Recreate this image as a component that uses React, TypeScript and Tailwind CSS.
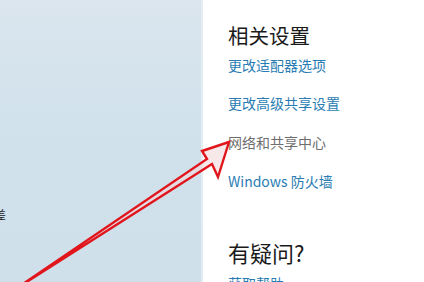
const cjk = { fontFamily: '"Noto Sans CJK SC", "Noto Sans", sans-serif' };

const Arrow = () => (
  <svg className="pointer-events-none absolute left-0 top-0" width="424" height="282" viewBox="0 0 424 282">
    <polygon
      points="229,142 202,151 207,159 14,290 212,164 218,177"
      fill="#f2d9dc"
      fillOpacity="0.6"
      stroke="#e0161c"
      strokeWidth="2.4"
      strokeLinejoin="miter"
    />
  </svg>
);

export default function App() {
  return (
    <div className="relative flex h-[282px] w-[424px] overflow-hidden bg-white" style={cjk}>
      {/* blurred window content on the left */}
      <div className="relative h-full w-[203px] shrink-0 border-r-2 border-[#e4edf3] bg-gradient-to-b from-[#dbe6ee] via-[#d0e1ec] to-[#cfe0ea]">
        <span className="absolute left-[-6px] top-[209px] text-[12px] leading-[12px] text-[#222]">差</span>
      </div>

      <div className="flex flex-col pl-[25px] pt-[25px]">
        <h2 className="text-[20.5px] leading-[20px] text-[#1b1b1b]">相关设置</h2>
        <a className="mt-[13px] text-[14px] leading-[14px] text-[#2a7db3]">更改适配器选项</a>
        <a className="mt-[24px] text-[14px] leading-[14px] text-[#2a7db3]">更改高级共享设置</a>
        <span className="mt-[25px] text-[14px] leading-[14px] text-[#6e6e6e]">网络和共享中心</span>
        <a className="mt-[25px] text-[14px] leading-[14px] text-[#2a7db3]">Windows 防火墙</a>
        <h2 className="mt-[53px] text-[22px] leading-[22px] text-[#1b1b1b]">有疑问?</h2>
        <a className="mt-[13px] text-[14px] leading-[14px] text-[#2a7db3]">获取帮助</a>
      </div>

      <Arrow />
    </div>
  );
}
